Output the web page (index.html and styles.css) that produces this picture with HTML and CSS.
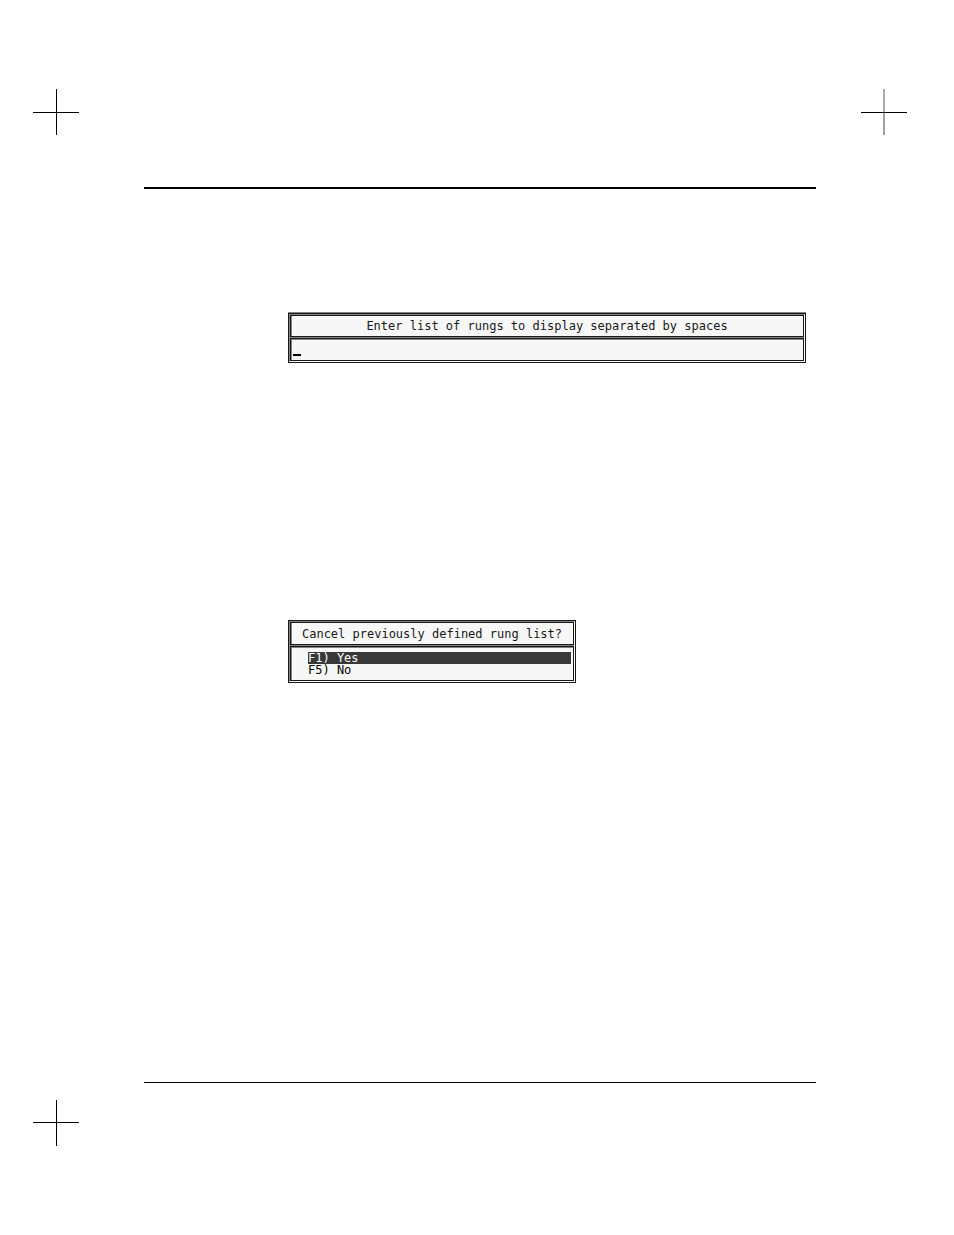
FILE: index.html
```
<!doctype html>
<html lang="en">
<head>
  <meta charset="utf-8"/>
  <meta name="viewport" content="width=device-width, initial-scale=1"/>
  <title>Rung List</title>
  <link rel="stylesheet" href="styles.css">
</head>
<body>
<header class="marks">
  <svg class="mark" viewBox="0 0 46 46" aria-hidden="true"><path d="M0 23.5H46M23.5 0V46"/></svg>
  <svg class="mark" viewBox="0 0 46 46" aria-hidden="true"><path d="M0 23.5H46"/><path class="mark-soft" d="M23 0V26"/><path class="mark-faint" d="M23 26V46"/></svg>
</header>

<main class="page">
  <form class="dialog dialog-wide">
    <div class="frame">
      <div class="panel title">
        <label for="rungs">Enter list of rungs to display separated by spaces</label>
      </div>
      <div class="panel entry">
        <span class="cursor"></span>
        <input type="text" id="rungs" autocomplete="off"/>
      </div>
    </div>
  </form>

  <form class="dialog dialog-menu">
    <div class="frame">
      <h2 class="panel title">Cancel previously defined rung list?</h2>
      <div class="panel menu">
        <button type="button" class="choice selected">F1) Yes</button>
        <button type="button" class="choice">F5) No</button>
      </div>
    </div>
  </form>
</main>

<footer class="marks">
  <svg class="mark" viewBox="0 0 46 46" aria-hidden="true"><path d="M0 22.5H46M23.5 0V46"/></svg>
</footer>
</body>
</html>
```

FILE: styles.css
```
:root{
  --ink:#181818;--shade:#858585;--paper:#f7f7f7;--bar:#383838;
}
*{box-sizing:border-box}
body{
  margin:0;min-height:100vh;padding:89px 0;background:#fff;color:var(--ink);
  display:flex;flex-direction:column;
  font:12px/12px "DejaVu Sans Mono","Liberation Mono",monospace;
}

/* crop marks */
.marks{display:flex;justify-content:space-between;padding:0 47px 0 33px}
.mark{width:46px;height:46px;fill:none;stroke:#000;stroke-width:1}
.mark-soft{stroke:#555}
.mark-faint{stroke:#a0a0a0;stroke-width:2}

.page{
  flex:1;margin:52px 138px 17px 144px;padding:124px 10px 0 144px;
  border-top:2px solid #000;border-bottom:1px solid #000;
}

/* double line dialog boxes */
.dialog{border:1px solid var(--ink);margin-bottom:257px}
.dialog-wide{max-width:518px;box-shadow:0 -1px var(--shade)}
.dialog-menu{max-width:288px;margin-bottom:0}
.frame{
  display:flex;flex-direction:column;gap:1px;background:var(--shade);
  border:1px solid;border-color:var(--shade) #fff #fff var(--shade);
}
.panel{
  border:1px solid var(--ink);background:var(--paper);
  box-shadow:inset 1px 0 var(--shade);
}
.title{
  margin:0;padding:4px 0;font-size:12px;font-weight:400;text-align:center;
}
.dialog-menu .title{padding:5px 0 4px}
.entry{
  display:flex;align-items:flex-end;height:23px;padding:0 2px 4px;
  box-shadow:inset 1px 1px var(--shade);
}
.cursor{width:8px;height:2px;background:#000}
.entry input{
  flex:1;min-width:0;height:12px;padding:0;border:0;outline:0;
  background:none;color:inherit;font:inherit;
}
.menu{
  display:flex;flex-direction:column;padding:5px 2px 4px 17px;
  box-shadow:inset 1px 1px var(--shade);
}
.choice{
  height:12px;padding:0;border:0;background:none;color:#000;
  font:inherit;text-align:left;cursor:pointer;
}
.selected{background:var(--bar);color:#fff}
```
